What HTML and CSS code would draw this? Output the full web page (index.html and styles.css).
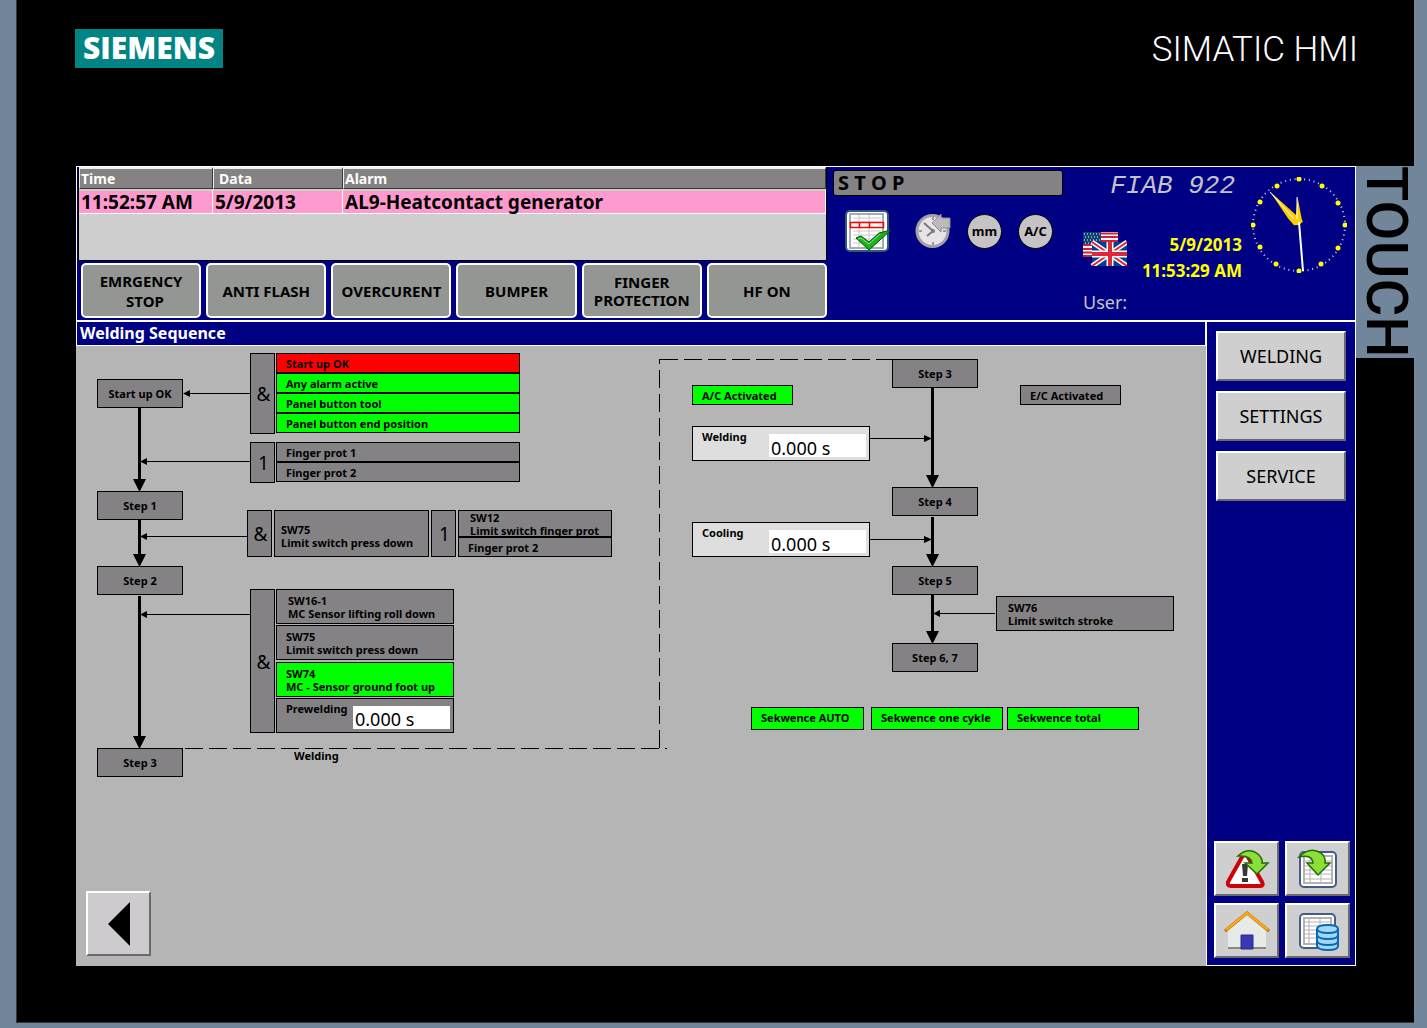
FILE: index.html
```html
<!DOCTYPE html>
<html lang="en">
<head>
<meta charset="utf-8">
<title>FIAB 922 - Welding Sequence</title>
<link rel="stylesheet" href="styles.css">
</head>
<body>
<div class="bezel">
  <header class="brand">
    <span class="brand-logo">SIEMENS</span>
    <span class="brand-model">SIMATIC HMI</span>
  </header>
  <div class="device">
    <main class="screen">
      <section class="top">
        <div class="alarms">
          <div class="alarm-view">
            <table class="alarm-table">
              <thead><tr><th class="col-time">Time</th><th class="col-date">Data</th><th>Alarm</th></tr></thead>
              <tbody><tr><td>11:52:57 AM</td><td>5/9/2013</td><td>AL9-Heatcontact generator</td></tr></tbody>
            </table>
          </div>
          <div class="signals">
            <button class="signal spread">EMRGENCY<br>&nbsp; STOP</button>
            <button class="signal">ANTI FLASH</button>
            <button class="signal">OVERCURENT</button>
            <button class="signal">BUMPER</button>
            <button class="signal">FINGER<br>PROTECTION</button>
            <button class="signal">HF ON</button>
          </div>
        </div>
        <div class="overview">
          <div class="status">
            <div class="state">S T O P</div>
            <div class="status-icons">
              <svg class="icon-check" width="48" height="42" viewBox="0 0 48 42">
                <rect x="1" y="1" width="42" height="40" rx="4" fill="#fff" stroke="#31597b" stroke-width="2"/>
                <rect x="5" y="4" width="33" height="34" fill="#fff" stroke="#a5aab5" stroke-width="2"/>
                <path d="M8 8H36M8 12H36M8 21H36M8 25H36M8 29H36M8 33H36M14 5V37M24 5V37" stroke="#c6c8ce" fill="none"/>
                <path d="M5.500 12.500H38.500V17.500H5.500ZM14.500 13V17M24.500 13V17" stroke="#f00" fill="none" stroke-width="1.500"/>
                <path d="M11 28L16 26L24 32L34 23L46 20L24 40Z" fill="#18b518" stroke="#084a08"/>
                <path d="M13 29L16 28L24 34L35 24" stroke="#8ce68c" fill="none"/>
              </svg>
              <svg class="icon-clock" width="36" height="36" viewBox="0 0 36 36">
                <circle cx="17.500" cy="18" r="15.500" fill="#e7e3e7" stroke="#a5a2a5" stroke-width="3"/>
                <path d="M18 4V7M18 29V32M4 18H7M28 18H31" stroke="#9c9a9c" stroke-width="2"/>
                <path d="M9 10L18 18L12 23" stroke="#7b797b" stroke-width="2" fill="none"/>
                <circle cx="18" cy="18" r="2" fill="#7b797b"/>
                <path d="M17 10L26 1V5H35V15H26V19Z" fill="#bdbabd" stroke="#8c8a8c"/>
              </svg>
              <button class="round">mm</button>
              <button class="round">A/C</button>
            </div>
          </div>
          <div class="info">
            <div class="machine">FIAB 922</div>
            <div class="locale">
              <svg class="flags" width="44" height="34" viewBox="0 0 44 34">
                <path fill="#fff" d="M0 0H35V24H0Z"/>
                <path d="M0 1.500H35M0 5H35M0 9H35M0 13H35M0 17H35M0 20.500H35M0 24H35" stroke="#ce2039" stroke-width="2"/>
                <path fill="#104173" d="M0 0H18V12H0Z"/>
                <path d="M1 2H17M2 5H17M1 8H17M2 11H17" stroke="#fff" stroke-dasharray="1 2"/>
                <path fill="#003d94" d="M9 10H44V34H9Z"/>
                <path d="M9 10L44 34M44 10L9 34" stroke="#fff" stroke-width="5"/>
                <path d="M9 10L44 34M44 10L9 34" stroke="#de2839" stroke-width="2"/>
                <path d="M27 10V34M9 22H44" stroke="#fff" stroke-width="7"/>
                <path d="M27 10V34M9 22H44" stroke="#de2839" stroke-width="4"/>
              </svg>
              <div class="datetime">5/9/2013<br>11:53:29 AM</div>
            </div>
            <div class="user">User:</div>
          </div>
          <svg class="dial" width="96" height="96" viewBox="-48 -48 96 96">
            <circle r="46" fill="none" stroke="#fff" stroke-width="2" stroke-dasharray="1 3.817" opacity=".8"/>
            <path d="M0 -28L3 -6L4 -3L0 0L-4 -2L-3 -6Z" transform="rotate(-3)" fill="#ffce00"/>
            <path d="M0 -44L4 -12L5 -4L0 0L-4 -3L-4 -12Z" transform="rotate(-41)" fill="#ffce00"/>
            <path d="M-29 -33L-5 -6M-2 -28V-6" stroke="#fff"/>
            <path d="M0 -3L4 46" stroke="#fff" stroke-width="2"/>
            <g fill="#ff0">
              <circle cy="-46" r="2.500"/><circle cx="23" cy="-39" r="2.500"/><circle cx="39" cy="-22" r="2.500"/>
              <circle cx="46" r="2.500"/><circle cx="39" cy="23" r="2.500"/><circle cx="22" cy="39" r="2.500"/>
              <circle cy="46" r="2.500"/><circle cx="-23" cy="39" r="2.500"/><circle cx="-39" cy="22" r="2.500"/>
              <circle cx="-46" r="2.500"/><circle cx="-39" cy="-23" r="2.500"/><circle cx="-22" cy="-39" r="2.500"/>
            </g>
          </svg>
        </div>
      </section>

      <section class="work">
        <div class="page">
          <h1 class="page-title">Welding Sequence</h1>
          <div class="canvas">
            <svg class="wires" width="1130" height="620" viewBox="0 0 1130 620">
              <g stroke="#000" stroke-width="3">
                <path d="M63.500 62V134M63.500 174V209M63.500 250V391M856.500 42V130M856.500 171V208M856.500 249V286"/>
              </g>
              <path d="M57 133H70L64 145H63ZM57 208H70L64 220H63ZM57 390H70L64 402H63ZM850 129H863L857 141H856ZM850 208H863L857 220H856ZM850 285H863L857 297H856Z"/>
              <g stroke="#000" fill="none">
                <path d="M174 47.500H110M174 115.500H66M171 190.500H66M174 268.500H66M794 92.500H854M792 193.500H854M919 267.500H859"/>
                <path d="M109 402.500H591M583.500 402V13M584 13.500H816" stroke-dasharray="18 6"/>
              </g>
              <path d="M107 47.500L114 44V51ZM64 115.500L71 112V119ZM64 190.500L71 187V194ZM64 268.500L71 265V272ZM856 92.500L848 89V96ZM856 193.500L848 190V197ZM857 267.500L864 264V271Z"/>
            </svg>

            <div class="node step at-start">Start up OK</div>
            <div class="node step at-1">Step 1</div>
            <div class="node step at-2">Step 2</div>
            <div class="node step at-3">Step 3</div>

            <div class="group g-start">
              <div class="node gate">&amp;</div>
              <div class="rows wide">
                <div class="node line fault">Start up OK</div>
                <div class="node line on">Any alarm active</div>
                <div class="node line on">Panel button tool</div>
                <div class="node line on">Panel button end position</div>
              </div>
            </div>

            <div class="group g-finger">
              <div class="node gate">1</div>
              <div class="rows wide">
                <div class="node line">Finger prot 1</div>
                <div class="node line">Finger prot 2</div>
              </div>
            </div>

            <div class="group g-press">
              <div class="node gate">&amp;</div>
              <div class="node press">SW75<br>Limit switch press down</div>
              <div class="node gate">1</div>
              <div class="rows narrow">
                <div class="node line tall">SW12<br>Limit switch finger prot</div>
                <div class="node line">Finger prot 2</div>
              </div>
            </div>

            <div class="group g-sensors">
              <div class="node gate">&amp;</div>
              <div class="rows spaced">
                <div class="node block inset">SW16-1<br>MC Sensor lifting roll down</div>
                <div class="node block">SW75<br>Limit switch press down</div>
                <div class="node block on">SW74<br>MC - Sensor ground foot up</div>
                <div class="node block timer"><label for="prewelding">Prewelding</label><input id="prewelding" class="value" value="0.000 s"></div>
              </div>
            </div>
            <div class="caption">Welding</div>

            <div class="node step at-3b">Step 3</div>
            <div class="node step at-4">Step 4</div>
            <div class="node step at-5">Step 5</div>
            <div class="node step at-67">Step 6, 7</div>
            <div class="node flag at-ac on">A/C Activated</div>
            <div class="node flag at-ec">E/C Activated</div>
            <div class="node block timer light at-weld"><label for="welding">Welding</label><input id="welding" class="value" value="0.000 s"></div>
            <div class="node block timer light at-cool"><label for="cooling">Cooling</label><input id="cooling" class="value" value="0.000 s"></div>
            <div class="node block inset at-sw76">SW76<br>Limit switch stroke</div>
            <div class="node mode mode-auto on">Sekwence AUTO</div>
            <div class="node mode mode-one on">Sekwence one cykle</div>
            <div class="node mode mode-total on">Sekwence total</div>

            <button class="key back" aria-label="Back">
              <svg width="24" height="46" viewBox="0 0 24 46"><path d="M23 1V45L1 23Z"/></svg>
            </button>
          </div>
        </div>

        <aside class="side">
          <nav class="menu">
            <button class="key">WELDING</button>
            <button class="key">SETTINGS</button>
            <button class="key">SERVICE</button>
          </nav>
          <div class="tools">
            <button class="key" aria-label="Alarms">
              <svg width="46" height="42" viewBox="0 0 46 42">
                <path d="M18 9L4 34Q3 38 7 38H36Q40 38 38 34L24 9Q21 5 18 9Z" fill="#fff" stroke="#ce0008" stroke-width="4"/>
                <path d="M18 16H24L23 28H19ZM18 30H24V34H18Z" fill="#393839"/>
                <path d="M14 8Q25 -2 35 7Q39 11 38 15H44L33 26L21 15H28Q27 7 14 8Z" fill="#8cdf39" stroke="#216d08" stroke-width="1.500"/>
              </svg>
            </button>
            <button class="key" aria-label="Recipes">
              <svg width="42" height="40" viewBox="0 0 42 40">
                <rect x="3" y="3" width="36" height="35" rx="4" fill="#fff" stroke="#425d8c" stroke-width="2"/>
                <path d="M7 7H35V34H7Z" fill="#fff" stroke="#b5b2b5" stroke-width="2"/>
                <path d="M8 12H34M8 17H34M8 21H34M8 25H34M8 30H34M13 7V34M24 7V34" stroke="#b5b2b5"/>
                <path d="M2 8Q13 -3 24 4Q29 8 28 14H33L21 26L10 14H16Q15 5 2 8Z" fill="#8cdf39" stroke="#216d08" stroke-width="1.500"/>
              </svg>
            </button>
            <button class="key" aria-label="Home">
              <svg width="46" height="40" viewBox="0 0 46 40">
                <path d="M4 19L23 2L42 19V38H4Z" fill="#e7ebe7"/>
                <path d="M4 37H42" stroke="#848a84" stroke-width="2"/>
                <path d="M17 24H29V38H17Z" fill="#3938b5" stroke="#29288c"/>
                <path d="M1 20L23 2L45 20" fill="none" stroke="#bd6d08" stroke-width="3"/>
                <path d="M2 19L23 2L44 19" fill="none" stroke="#ffb210" stroke-width="2"/>
              </svg>
            </button>
            <button class="key" aria-label="Data records">
              <svg width="42" height="40" viewBox="0 0 42 40">
                <rect x="3" y="3" width="35" height="34" rx="4" fill="#fff" stroke="#425d8c" stroke-width="2"/>
                <path d="M7 7H34V33H7Z" fill="#fff" stroke="#b5b2b5" stroke-width="2"/>
                <path d="M8 11H33M8 15H33M8 19H33M8 23H33M8 27H33M12 7V33M23 7V33" stroke="#b5b2b5"/>
                <path d="M20 18V35Q21 39 31 39Q41 39 41 35V18Q41 14 31 14Q20 14 20 18Z" fill="#a5d7f7" stroke="#0869b5" stroke-width="2"/>
                <path d="M20 18Q21 22 31 22Q41 22 41 18M20 24Q21 28 31 28Q41 28 41 24M20 30Q21 34 31 34Q41 34 41 30" fill="none" stroke="#0869b5" stroke-width="2"/>
              </svg>
            </button>
          </div>
        </aside>
      </section>
    </main>
    <div class="touch">TOUCH</div>
  </div>
</div>
</body>
</html>
```
FILE: styles.css
```css
* { box-sizing: border-box; }

body {
  margin: 0;
  min-height: 100vh;
  padding: 0 13px 5px 16px;
  display: flex;
  background: #71869a;
  font-family: Tahoma, "Noto Sans", sans-serif;
  color: #000;
}

button, input { font: inherit; color: inherit; margin: 0; }
button { padding: 0; cursor: pointer; }
svg { display: block; }

.bezel {
  flex: 1;
  min-width: 0;
  background: #000;
  border-left: 1px solid #30383f;
  border-bottom: 1px solid #30383f;
  padding-bottom: 56px;
}

/* Brand line above the panel */
.brand {
  display: flex;
  justify-content: space-between;
  align-items: flex-start;
  height: 166px;
  padding: 29px 56px 0 58px;
}
.brand-logo {
  width: 148px;
  height: 39px;
  background: #008484;
  color: #fff;
  font: 800 30px/38px "Open Sans", sans-serif;
  text-align: center;
}
.brand-model {
  color: #fff;
  font: 300 35px/41px Roboto, sans-serif;
}

.device {
  display: flex;
  align-items: flex-start;
  padding-left: 59px;
}
.touch {
  width: 58px;
  height: 192px;
  flex: none;
  background: #71869a;
  writing-mode: vertical-rl;
  text-align: center;
  font: 500 58px/54px Roboto, sans-serif;
}

.screen {
  flex: 1;
  min-width: 0;
  background: #000084;
}

/* Header */
.top {
  display: grid;
  grid-template-columns: minmax(0, 750fr) minmax(0, 528fr);
  border: 1px solid #fff;
  border-bottom-width: 2px;
}
.alarms { padding: 0 0 2px 1px; }
.alarm-view {
  height: 94px;
  background: #cecece;
  border: solid #000;
  border-width: 0 1px 1px;
}
.alarm-table {
  width: 100%;
  border-collapse: separate;
  border-spacing: 0;
  table-layout: fixed;
  text-align: left;
}
.col-time { width: 134px; }
.col-date { width: 130px; }
.alarm-table th {
  height: 22px;
  padding: 0 0 0 1px;
  background: #848284;
  color: #fff;
  font-size: 14px;
  line-height: 18px;
  border: solid #efefe7;
  border-width: 2px 1px 1px 1px;
  border-right-color: #393839;
  border-bottom-color: #393839;
}
.alarm-table .col-date { padding-left: 5px; }
.alarm-table td {
  height: 25px;
  padding: 0 2px;
  background: #ff9ace;
  border-top: 2px solid #cecece;
  border-right: 1px solid #fff;
  border-bottom: 1px solid #fff;
  font-size: 19px;
  line-height: 22px;
  font-weight: 700;
  white-space: nowrap;
}
.signals {
  display: grid;
  grid-template-columns: repeat(6, minmax(0, 1fr));
  gap: 5px;
  padding: 2px 0 0 3px;
}
.signal {
  height: 55px;
  border: 2px solid #fff;
  border-radius: 5px;
  background: #949694;
  font-size: 15px;
  line-height: 18px;
  font-weight: 700;
  white-space: nowrap;
}
.spread { line-height: 20px; }

.overview {
  display: flex;
  gap: 8px;
  padding: 3px 8px 0 6px;
}
.status { flex: 1; min-width: 0; max-width: 230px; }
.state {
  height: 26px;
  padding-left: 4px;
  border: 1px solid #000;
  border-radius: 3px;
  background: #848284;
  font-size: 20px;
  line-height: 24px;
  font-weight: 700;
}
.status-icons {
  display: flex;
  align-items: center;
  gap: 16px;
  padding: 14px 0 0 12px;
}
.icon-check { margin-right: 6px; }
.round {
  width: 35px;
  height: 35px;
  border: 1px solid #000;
  border-radius: 50%;
  background: #c6c3c6;
  font-size: 13px;
  line-height: 30px;
  font-weight: 700;
}
.info { flex: none; width: 166px; padding-left: 6px; margin-left: auto; }
.machine {
  text-align: right;
  padding-right: 8px;
  color: #c6c3c6;
  font: italic 400 26px/32px "Courier New", "Liberation Mono", monospace;
}
.locale {
  display: flex;
  justify-content: space-between;
  padding: 30px 1px 0 0;
}
.datetime {
  text-align: right;
  color: #ff0;
  font-size: 17px;
  line-height: 26px;
  font-weight: 700;
  white-space: nowrap;
}
.user {
  padding-top: 5px;
  color: #c6c3c6;
  font-size: 18px;
  line-height: 26px;
}
.dial { flex: none; margin-top: 7px; }

/* Working area */
.work { display: flex; }
.page { flex: 1; min-width: 0; }
.page-title {
  margin: 0;
  height: 24px;
  padding-left: 3px;
  border: solid #fff;
  border-width: 0 1px 1px;
  color: #fff;
  font-size: 16px;
  line-height: 22px;
}
.canvas {
  position: relative;
  height: 620px;
  background: #b5b5b5;
  font-size: 11px;
  line-height: 13px;
  font-weight: 700;
}
.wires { position: absolute; left: 0; top: 0; }
.node {
  border: 1px solid #000;
  background: #848284;
  white-space: nowrap;
}
.on { background: #0f0; }
.fault { background: #f00; }
.step {
  position: absolute;
  width: 86px;
  height: 29px;
  line-height: 28px;
  text-align: center;
}
.at-start { left: 21px; top: 33px; }
.at-1 { left: 21px; top: 145px; }
.at-2 { left: 21px; top: 220px; }
.at-3 { left: 21px; top: 402px; }
.at-3b { left: 816px; top: 13px; }
.at-4 { left: 816px; top: 141px; }
.at-5 { left: 816px; top: 220px; }
.at-67 { left: 816px; top: 297px; }

.group { position: absolute; display: flex; gap: 1px; }
.g-start { left: 174px; top: 7px; height: 81px; }
.g-finger { left: 174px; top: 96px; height: 41px; }
.g-press { left: 171px; top: 164px; height: 47px; width: 365px; justify-content: space-between; }
.g-sensors { left: 174px; top: 243px; height: 144px; }
.gate {
  width: 25px;
  padding: 2px 0 0 2px;
  display: flex;
  align-items: center;
  justify-content: center;
  font-size: 19px;
  font-weight: 400;
}
.wide { width: 244px; }
.narrow { width: 154px; }
.spaced { width: 178px; display: flex; flex-direction: column; justify-content: space-between; }
.line { height: 20px; padding-left: 9px; line-height: 19px; }
.tall { height: 27px; padding-left: 11px; line-height: 13px; }
.press { width: 155px; padding: 12px 0 0 6px; }
.block { height: 35px; padding: 4px 0 0 9px; }
.inset { padding-left: 11px; }
.timer { display: flex; justify-content: space-between; padding: 3px 3px 0 9px; }
.light { background: #dedede; }
.value {
  width: 97px;
  height: 23px;
  margin-top: 4px;
  padding: 4px 0 0 2px;
  border: 0;
  background: #fff;
  font-size: 18px;
  line-height: 19px;
  font-weight: 400;
}
.caption { position: absolute; left: 218px; top: 403px; }
.flag { position: absolute; top: 39px; width: 101px; height: 20px; padding-left: 9px; line-height: 19px; }
.at-ac { left: 616px; }
.at-ec { left: 944px; }
.at-weld, .at-cool, .at-sw76 { position: absolute; width: 178px; }
.at-weld { left: 616px; top: 80px; }
.at-cool { left: 616px; top: 176px; }
.at-sw76 { left: 920px; top: 250px; }
.mode { position: absolute; top: 361px; width: 132px; height: 23px; padding-left: 9px; line-height: 20px; }
.mode-auto { left: 675px; width: 113px; }
.mode-one { left: 795px; }
.mode-total { left: 931px; }

/* Raised keys */
.key {
  display: flex;
  align-items: center;
  justify-content: center;
  border: 2px solid;
  border-color: #fff #6b696b #6b696b #fff;
  background: #cecfce;
  font-size: 18px;
}
.back { position: absolute; left: 10px; top: 545px; width: 65px; height: 65px; background: #cecbce; }

.side {
  width: 150px;
  flex: none;
  display: flex;
  flex-direction: column;
  justify-content: space-between;
  border: solid #fff;
  border-width: 0 1px 1px;
}
.menu { display: grid; gap: 10px; padding: 9px 9px 0; }
.menu .key { height: 50px; }
.tools { display: grid; grid-template-columns: 1fr 1fr; gap: 7px 6px; padding: 0 5px 7px 7px; }
.tools .key { height: 55px; }
```
